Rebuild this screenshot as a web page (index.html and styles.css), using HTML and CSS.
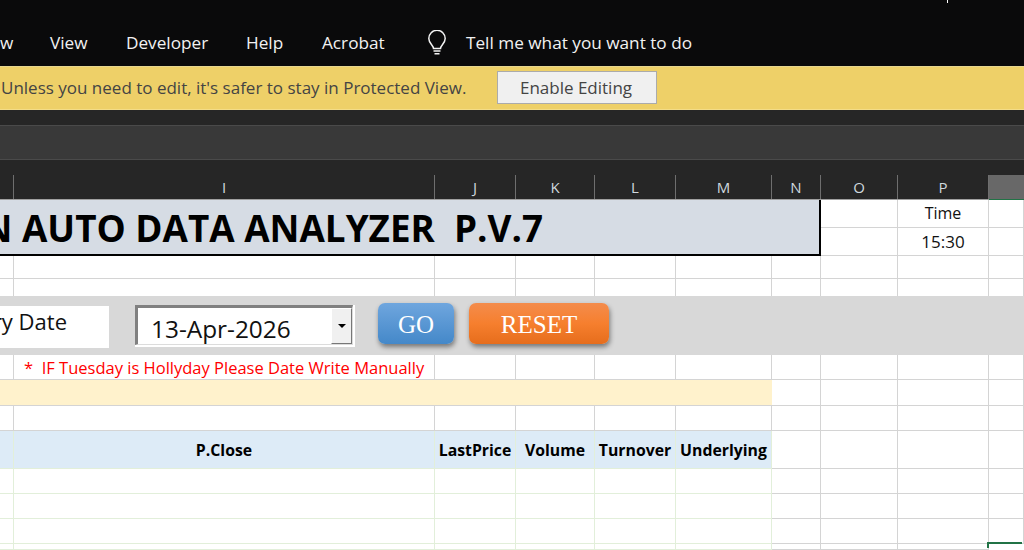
FILE: index.html
```html
<!DOCTYPE html>
<html lang="en">
<head>
<meta charset="utf-8">
<title>Protected View workbook</title>
<link rel="stylesheet" href="styles.css">
</head>
<body>
<header class="menubar">
  <span class="tick"></span>
  <nav class="menu">
    <span class="menu-clip">w</span>
    <span>View</span>
    <span>Developer</span>
    <span>Help</span>
    <span>Acrobat</span>
  </nav>
  <svg class="bulb" width="20" height="26" viewBox="0 0 20 26" fill="none" stroke="#f2f2f2" stroke-width="1.5"><path d="M6.5 18.5c0-3-4.7-5-4.7-10a8.2 8.200 0 0 1 16.400 0c0 5-4.700 7-4.700 10z"/><path d="M6.500 21h7M7.500 23.700h5"/></svg>
  <span class="tell">Tell me what you want to do</span>
</header>
<section class="notice">
  <span class="notice-text">Unless you need to edit, it's safer to stay in Protected View.</span>
  <button class="enable">Enable Editing</button>
</section>
<div class="gap"></div>
<div class="formula"></div>
<div class="columns">
  <div class="col-top"></div>
  <div class="col-row">
    <b></b><b>I</b><b>J</b><b>K</b><b>L</b><b>M</b><b>N</b><b>O</b><b>P</b><b class="col-active"></b>
  </div>
</div>
<main class="sheet">
  <div class="title">N AUTO DATA ANALYZER  P.V.7</div>
  <i></i><i class="txt">Time</i><i></i>
  <i></i><i class="txt time-val">15:30</i><i></i>

  <i></i><i></i><i></i><i></i><i></i><i></i><i></i><i></i><i></i><i></i>
  <i class="nb"></i><i class="nb"></i><i class="nb"></i><i class="nb"></i><i class="nb"></i><i class="nb"></i><i class="nb"></i><i class="nb"></i><i class="nb"></i><i class="nb"></i>

  <div class="band">
    <div class="date-label">ry Date</div>
    <div class="combo">
      <div class="combo-inner">
        <span class="combo-value">13-Apr-2026</span>
        <span class="combo-btn"><span class="combo-arrow"></span></span>
      </div>
    </div>
    <div class="btn go">GO</div>
    <div class="btn reset">RESET</div>
  </div>

  <i></i><i class="note">*&nbsp; IF Tuesday is Hollyday Please Date Write Manually</i><i></i><i></i><i></i><i></i><i></i><i></i><i></i><i></i>

  <div class="cream"></div><i></i><i></i><i></i><i></i>

  <i></i><i></i><i></i><i></i><i></i><i></i><i></i><i></i><i></i><i></i>

  <i class="th"></i><i class="th">P.Close</i><i class="th">LastPrice</i><i class="th">Volume</i><i class="th">Turnover</i><i class="th">Underlying</i><i></i><i></i><i></i><i></i>

  <i class="td"></i><i class="td"></i><i class="td"></i><i class="td"></i><i class="td"></i><i class="td"></i><i></i><i></i><i></i><i></i>
  <i class="td"></i><i class="td"></i><i class="td"></i><i class="td"></i><i class="td"></i><i class="td"></i><i></i><i></i><i></i><i></i>
  <i class="td"></i><i class="td"></i><i class="td"></i><i class="td"></i><i class="td"></i><i class="td"></i><i></i><i></i><i></i><i></i>
  <i class="td"></i><i class="td"></i><i class="td"></i><i class="td"></i><i class="td"></i><i class="td"></i><i></i><i></i><i></i><i class="sel"></i>
</main>
</body>
</html>
```
FILE: styles.css
```css
html, body {
  margin: 0;
  height: 550px;
  overflow: hidden;
  background: #fff;
  font-family: "Open Sans", "Noto Sans", sans-serif;
}
.menubar {
  position: relative;
  height: 66px;
  box-sizing: border-box;
  padding-top: 27px;
  background: #0a0a0b;
  color: #f2f2f2;
  display: flex;
  align-items: flex-start;
  font-size: 17.2px;
  line-height: 32px;
}
.tick {
  position: absolute;
  left: 947px;
  top: 0;
  width: 1px;
  height: 3px;
  background: #fff;
}
.menu {
  display: flex;
  width: 428px;
}
.menu-clip { width: 50px; }
.menu span:nth-child(2) { width: 76px; }
.menu span:nth-child(3) { width: 120px; }
.menu span:nth-child(4) { width: 76px; }
.bulb {
  margin-top: 3px;
  margin-left: -1px;
}
.tell { margin-left: 19px; }

.notice {
  height: 44px;
  box-sizing: border-box;
  border-top: 1px solid #e6d68f;
  border-bottom: 1px solid #f3dc88;
  background: #eed068;
  color: #444;
  display: flex;
  align-items: flex-start;
  font-size: 17px;
}
.notice-text {
  margin-left: 1px;
  width: 496px;
  line-height: 41px;
  white-space: nowrap;
}
.enable {
  width: 160px;
  height: 33px;
  margin-top: 4px;
  padding: 0 2px 0 0;
  border: 1px solid #ababab;
  border-radius: 0;
  background: #f0f0f0;
  color: #444;
  font: inherit;
  line-height: 31px;
}
.gap { height: 15px; background: #262626; }
.formula {
  height: 33px;
  border-top: 1px solid #4a4a4a;
  border-bottom: 1px solid #4a4a4a;
  background: #393939;
}
.columns { background: #262626; }
.col-top { height: 15px; }
.col-row,
.sheet {
  display: grid;
  grid-template-columns: 14px 421px 81px 79px 81px 96px 49px 77px 91px 35px;
}
.col-row {
  height: 25px;
  box-sizing: border-box;
  border-bottom: 1px solid #a0a0a0;
}
.col-row b {
  box-sizing: border-box;
  border-right: 1px solid #6e6e6e;
  color: #cfd8de;
  font-size: 15px;
  font-weight: 400;
  line-height: 24px;
  text-align: center;
}
.col-row .col-active {
  border-right: 0;
  background: #686868;
  box-shadow: 0 1px 0 #217346;
}

.sheet {
  grid-template-rows: 28px 28px 23px 17px 59px 25px 26px 25px 38px 25px 25px 25px 6px;
  height: 350px;
  overflow: hidden;
}
.sheet i {
  display: block;
  box-sizing: border-box;
  border-right: 1px solid #d4d4d4;
  border-bottom: 1px solid #d4d4d4;
  font-style: normal;
  white-space: nowrap;
  min-width: 0;
}
.sheet .nb { border-bottom: 0; }
.sheet .txt {
  color: #111;
  font-size: 16px;
  line-height: 27px;
  text-align: center;
}
.sheet .time-val { font-size: 17px; }
.title {
  grid-column: 1 / 8;
  grid-row: 1 / 3;
  box-sizing: border-box;
  padding-right: 276px;
  border-right: 2px solid #000;
  border-bottom: 2px solid #000;
  background: #d6dce4;
  color: #000;
  display: flex;
  justify-content: flex-end;
  overflow: hidden;
  font-size: 36.8px;
  font-weight: 700;
  line-height: 56px;
  white-space: pre;
}
.band {
  grid-column: 1 / -1;
  background: #d8d8d8;
  display: flex;
  align-items: flex-start;
}
.date-label {
  width: 109px;
  height: 42px;
  margin-top: 10px;
  padding-right: 42px;
  box-sizing: border-box;
  background: #fff;
  color: #111;
  display: flex;
  justify-content: flex-end;
  font-size: 22px;
  line-height: 31px;
  white-space: nowrap;
}
.combo {
  width: 220px;
  height: 42px;
  margin: 9px 0 0 26px;
  padding: 0 2px 2px 0;
  box-sizing: border-box;
  background: #fff;
}
.combo-inner {
  height: 100%;
  box-sizing: border-box;
  border-top: 3px solid #808080;
  border-left: 3px solid #808080;
  border-right: 1px solid #dcdcdc;
  border-bottom: 1px solid #dcdcdc;
  display: flex;
  justify-content: space-between;
}
.combo-value {
  margin-left: 13px;
  color: #111;
  font-size: 24.4px;
  line-height: 42px;
  height: 36px;
}
.combo-btn {
  width: 21px;
  box-sizing: border-box;
  border: 1px solid #fff;
  border-right-color: #777;
  border-bottom-color: #777;
  background: #f0f0f0;
  display: flex;
  align-items: center;
  justify-content: center;
}
.combo-arrow {
  width: 0;
  height: 0;
  border: 4.5px solid transparent;
  border-top: 4px solid #000;
  border-bottom: 0;
}
.btn {
  height: 41px;
  margin-top: 7px;
  box-sizing: border-box;
  border-radius: 7px;
  color: #fff;
  font-family: "Liberation Serif", serif;
  font-size: 25px;
  line-height: 44px;
  text-align: center;
  box-shadow: 1px 3px 5px rgba(0, 0, 0, .45);
}
.go {
  width: 76px;
  margin-left: 23px;
  background: linear-gradient(#6fa6de, #4488c9);
}
.reset {
  width: 140px;
  margin-left: 15px;
  background: linear-gradient(#f48c4c 0%, #f67f2e 50%, #e66d1c 100%);
}
.sheet .note {
  color: #f00;
  font-size: 16.5px;
  line-height: 26px;
  padding-left: 10px;
  overflow: visible;
}
.cream {
  grid-column: 1 / 7;
  background: #fff2cc;
  border-bottom: 1px solid #d4d4d4;
}
.sheet .th {
  background: #ddebf7;
  border-color: #e2efda;
  color: #000;
  font-size: 15.8px;
  font-weight: 700;
  line-height: 38px;
  text-align: center;
}
.sheet .td { border-color: #e2efda; }
.sheet .sel {
  border: 0;
  box-shadow: -2px -2px 0 #217346;
}
```
